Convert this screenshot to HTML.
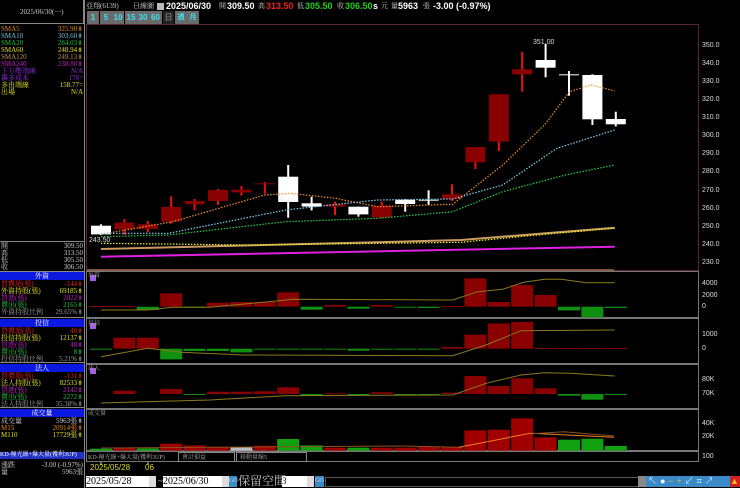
<!DOCTYPE html>
<html><head><meta charset="utf-8"><style>
*{margin:0;padding:0;box-sizing:border-box}
body{width:740px;height:488px;background:#000;overflow:hidden;position:relative;font-family:"Liberation Serif","Noto Serif CJK SC","Noto Sans CJK TC",serif;font-size:8px;color:#ccc}
.a{position:absolute;white-space:nowrap;line-height:1}
.b{font-family:"Liberation Sans","Noto Sans CJK TC",sans-serif;font-weight:bold}
.r{text-align:right}
.hd{position:absolute;left:0;width:84px;height:8px;background:#0a18e0;color:#fff;text-align:center;font-size:7px;line-height:8px}
.btn{position:absolute;top:11px;height:13px;background:#6a6a6a;color:#3ee0f0;font-size:8px;text-align:center;line-height:13px;font-family:"Liberation Sans",sans-serif;font-weight:bold}
.ax{position:absolute;left:702px;font-size:7px;color:#ddd;font-family:"Liberation Sans",sans-serif}
</style></head><body>
<!-- left column -->
<div class="a" style="left:0;top:0;width:84px;height:24px;border-right:1px solid #888;border-bottom:1px solid #888"></div>
<div class="a" style="left:20px;top:9px;font-size:7px;color:#ccc">2025/06/30(一)</div>
<div style="position:absolute;left:84px;top:0;width:1px;height:488px;background:#888"></div>
<div class="a" style="left:1px;top:26px;width:82px;font-size:7px;line-height:7px">
<div style="color:#e08a20">SMA5<span style="float:right">325.90⇟</span></div>
<div style="color:#70c0e0">SMA10<span style="float:right">303.60⇟</span></div>
<div style="color:#20c040">SMA20<span style="float:right">284.03⇟</span></div>
<div style="color:#e0e020">SMA60<span style="float:right">248.94⇟</span></div>
<div style="color:#c09060">SMA120<span style="float:right">249.13⇟</span></div>
<div style="color:#c020c0">SMA240<span style="float:right">238.80⇟</span></div>
<div style="color:#9030e0">下方壓端線<span style="float:right">N/A</span></div>
<div style="color:#9030e0">籌多成本<span style="float:right">178=</span></div>
<div style="color:#e0e020">多由端線<span style="float:right">158.77=</span></div>
<div style="color:#e0e020">出場<span style="float:right">N/A</span></div>
</div>
<div style="position:absolute;left:0;top:241px;width:84px;height:1px;background:#888"></div>
<div class="a" style="left:1px;top:243px;width:82px;font-size:7px;line-height:7px;color:#ccc">
<div>開<span style="float:right">309.50</span></div><div>高<span style="float:right">313.50</span></div><div>低<span style="float:right">305.50</span></div><div>收<span style="float:right">306.50</span></div></div>
<div style="position:absolute;left:0;top:271px;width:84px;height:1px;background:#888"></div>
<div class="hd" style="top:272px">外資</div>
<div class="a" style="left:1px;top:281px;width:82px;font-size:7px;line-height:7px">
<div style="color:#e02020">買賣超(張)<span style="float:right">-144⇟</span></div>
<div style="color:#e0e020">外資持股(張)<span style="float:right">69185⇟</span></div>
<div style="color:#c020c0">買進(張)<span style="float:right">2022⇟</span></div>
<div style="color:#20c040">賣出(張)<span style="float:right">2165⇟</span></div>
<div style="color:#999">外資持股比例<span style="float:right">29.65%⇟</span></div></div>
<div style="position:absolute;left:0;top:317px;width:84px;height:1px;background:#888"></div>
<div class="hd" style="top:319px">投信</div>
<div class="a" style="left:1px;top:328px;width:82px;font-size:7px;line-height:7px">
<div style="color:#e02020">買賣超(張)<span style="float:right">40⇟</span></div>
<div style="color:#e0e020">投信持股(張)<span style="float:right">12137⇟</span></div>
<div style="color:#c020c0">買進(張)<span style="float:right">48⇟</span></div>
<div style="color:#20c040">賣出(張)<span style="float:right">8⇟</span></div>
<div style="color:#999">投信持股比例<span style="float:right">5.21%⇟</span></div></div>
<div style="position:absolute;left:0;top:362px;width:84px;height:1px;background:#888"></div>
<div class="hd" style="top:364px">法人</div>
<div class="a" style="left:1px;top:373px;width:82px;font-size:7px;line-height:7px">
<div style="color:#e02020">買賣超(張)<span style="float:right">-131⇟</span></div>
<div style="color:#e0e020">法人持股(張)<span style="float:right">82533⇟</span></div>
<div style="color:#c020c0">買進(張)<span style="float:right">2142⇟</span></div>
<div style="color:#20c040">賣出(張)<span style="float:right">2272⇟</span></div>
<div style="color:#999">法人持股比例<span style="float:right">35.38%⇟</span></div></div>
<div style="position:absolute;left:0;top:407px;width:84px;height:1px;background:#888"></div>
<div class="hd" style="top:409px">成交量</div>
<div class="a" style="left:1px;top:418px;width:82px;font-size:7px;line-height:7px">
<div style="color:#ccc">成交量<span style="float:right">5963張⇟</span></div>
<div style="color:#e08a20">M15<span style="float:right">20914張⇟</span></div>
<div style="color:#e0e020">M110<span style="float:right">17729張⇟</span></div></div>
<div class="hd" style="top:452px;height:7px;line-height:7px;background:#2030c0;font-size:6px;text-align:left">KD-極光線+爆大量(獲利3UP)</div>
<div class="a" style="left:1px;top:462px;width:82px;font-size:7px;line-height:7px;color:#ccc">
<div>漲跌<span style="float:right">-3.00 (-0.97%)</span></div><div>量<span style="float:right">5963張</span></div></div>

<!-- header -->
<div class="a" style="left:86px;top:3px;font-size:7px;color:#ccc">亞翔(6139)</div>
<div class="a" style="left:133px;top:3px;font-size:7px;color:#ccc">日線圖</div>
<div class="a" style="left:157px;top:3px;width:7px;height:7px;background:#bbb"></div>
<div class="a b" style="left:166px;top:2px;font-size:9px;color:#fff">2025/06/30</div>
<div class="a" style="left:219px;top:3px;font-size:7px">開</div>
<div class="a b" style="left:227px;top:2px;font-size:9px;color:#fff">309.50</div>
<div class="a" style="left:258px;top:3px;font-size:7px">高</div>
<div class="a b" style="left:266px;top:2px;font-size:9px;color:#f02020">313.50</div>
<div class="a" style="left:297px;top:3px;font-size:7px">低</div>
<div class="a b" style="left:305px;top:2px;font-size:9px;color:#20d020">305.50</div>
<div class="a" style="left:337px;top:3px;font-size:7px">收</div>
<div class="a b" style="left:345px;top:2px;font-size:9px;color:#20d020">306.50</div>
<div class="a b" style="left:373px;top:2px;font-size:9px;color:#fff">s</div>
<div class="a" style="left:381px;top:3px;font-size:7px">元</div>
<div class="a" style="left:391px;top:3px;font-size:7px">量</div>
<div class="a b" style="left:398px;top:2px;font-size:9px;color:#fff">5963</div>
<div class="a" style="left:423px;top:3px;font-size:7px">張</div>
<div class="a b" style="left:433px;top:2px;font-size:9px;color:#fff">-3.00 (-0.97%)</div>
<div class="btn" style="left:87px;width:12px">1</div>
<div class="btn" style="left:100px;width:12px">5</div>
<div class="btn" style="left:112px;width:12px">10</div>
<div class="btn" style="left:125px;width:12px">15</div>
<div class="btn" style="left:137px;width:12px">30</div>
<div class="btn" style="left:149px;width:13px">60</div>
<div class="btn" style="left:163px;width:11px;background:#222;color:#777">日</div>
<div class="btn" style="left:175px;width:12px;font-size:7px">週</div>
<div class="btn" style="left:187px;width:12px;font-size:7px">月</div>

<!-- axis labels -->
<div class="ax" style="top:42px">350.0</div><div class="ax" style="top:60px">340.0</div><div class="ax" style="top:78px">330.0</div><div class="ax" style="top:96px">320.0</div><div class="ax" style="top:114px">310.0</div><div class="ax" style="top:132px">300.0</div><div class="ax" style="top:150px">290.0</div><div class="ax" style="top:168px">280.0</div><div class="ax" style="top:187px">270.0</div><div class="ax" style="top:205px">260.0</div><div class="ax" style="top:223px">250.0</div><div class="ax" style="top:241px">240.0</div><div class="ax" style="top:259px">230.0</div>
<div class="ax" style="top:280px">4000</div><div class="ax" style="top:292px">2000</div><div class="ax" style="top:303px">0</div>
<div class="ax" style="top:331px">1000</div><div class="ax" style="top:345px">0</div>
<div class="ax" style="top:376px">80K</div><div class="ax" style="top:390px">70K</div>
<div class="ax" style="top:420px">40K</div><div class="ax" style="top:433px">20K</div><div class="ax" style="top:453px">100</div>

<svg id="c" width="740" height="488" style="position:absolute;left:0;top:0" xmlns="http://www.w3.org/2000/svg">
<rect x="86.5" y="24.5" width="612" height="246" fill="none" stroke="#5a2838"/>
<rect x="86.5" y="271.5" width="612" height="46" fill="none" stroke="#777"/>
<rect x="86.5" y="318.5" width="612" height="45" fill="none" stroke="#777"/>
<rect x="86.5" y="364.5" width="612" height="44" fill="none" stroke="#777"/>
<rect x="86.5" y="409.5" width="612" height="41" fill="none" stroke="#777"/>
<rect x="86.5" y="451.5" width="612" height="10" fill="none" stroke="#777"/>
<rect x="90" y="275" width="6" height="6" fill="#a060e0"/>
<rect x="90" y="323" width="6" height="6" fill="#a060e0"/>
<rect x="90" y="368" width="6" height="6" fill="#a060e0"/>
<g id="g"></g>
<text x="533" y="44" fill="#ddd" font-size="7" font-family="Liberation Sans">351.00</text>
<text x="89" y="242" fill="#ddd" font-size="7" font-family="Liberation Sans">243.50</text>
<text x="88" y="277" fill="#aaa" font-size="6">外資</text>
<text x="88" y="325" fill="#aaa" font-size="6">投信</text>
<text x="88" y="370" fill="#aaa" font-size="6">法人</text>
<text x="88" y="415" fill="#aaa" font-size="6">成交量</text>
<text x="88" y="459" fill="#aaa" font-size="6">KD-極光線+爆大量(獲利3UP)</text>
<rect x="178.5" y="452.5" width="56" height="9" fill="#000" stroke="#888"/>
<text x="182" y="459" fill="#aaa" font-size="6">會計損益</text>
<rect x="236.5" y="452.5" width="70" height="9" fill="none" stroke="#888"/>
<text x="240" y="459" fill="#aaa" font-size="6">移動量線5</text>
<text x="90" y="470" fill="#d8d820" font-size="8" font-family="Liberation Sans">2025/05/28</text>
<text x="145" y="470" fill="#d8d820" font-size="8" font-family="Liberation Sans">06</text>
</svg>

<!-- bottom controls -->
<div class="a" style="left:86px;top:476px;width:70px;height:11px;background:#fff;color:#000;font-size:10px;line-height:11px">2025/05/28<span style="position:absolute;right:0;top:0;width:7px;height:11px;background:#ddd"></span></div>
<div class="a" style="left:158px;top:477px;color:#ccc;font-size:9px">~</div>
<div class="a" style="left:163px;top:476px;width:66px;height:11px;background:#fff;color:#000;font-size:10px;line-height:11px">2025/06/30<span style="position:absolute;right:0;top:0;width:7px;height:11px;background:#ddd"></span></div>
<div class="a" style="left:229px;top:476px;width:8px;height:11px;background:#3a8ac8;color:#cde;font-size:6px;line-height:11px">GO</div>
<div class="a" style="left:238px;top:475px;font-size:12px;color:#ccc">保留空間</div>
<div class="a" style="left:282px;top:476px;width:32px;height:11px;background:#fff;color:#000;font-size:9px;line-height:11px">3<span style="position:absolute;right:0;top:0;width:7px;height:11px;background:#ddd"></span></div>
<div class="a" style="left:315px;top:476px;width:9px;height:11px;background:#3a8ac8;color:#cde;font-size:6px;line-height:11px">GO</div>
<div class="a" style="left:325px;top:477px;width:315px;height:10px;background:#000;border:1px solid #555"></div>
<div class="a" style="left:638px;top:476px;width:8px;height:11px;background:#888"></div>
<div class="a" style="left:646px;top:476px;width:86px;height:11px;background:#3a8ac8"></div>
<div class="a" style="left:730px;top:476px;width:10px;height:11px;background:#d02020;color:#f0c020;font-size:9px;line-height:11px">▲</div>
<div class="a" style="left:648px;top:476px;color:#fff;font-size:9px;letter-spacing:3px;line-height:11px">↖●<span style="color:#f0d020">−+</span>↙⌗↗</div>

<script>
var g=document.getElementById('g'),h='';
function X(i){return 101+23.4*i}
function R(x,y,w,hh,f){h+='<rect x="'+x.toFixed(1)+'" y="'+y.toFixed(1)+'" width="'+w+'" height="'+Math.max(hh,1).toFixed(1)+'" fill="'+f+'"/>'}
var C=[['w',602,628,598,630],['r',593,613,582,630],['r',598,612,588,622],['r',546,590,514,596],['r',528,538,522,556],['r',495,528,492,540],['r',494,502,483,512],['r',475,478,471,506],['w',455,531,420,578],['w',535,545,515,556],['r',538,545,530,570],['w',545,568,545,575],['r',542,577,530,580],['w',524,537,522,560],['w',524,527,496,540],['r',508,522,478,528],['r',366,412,366,432],['r',208,350,208,378],['r',133,148,80,200],['w',105,128,57,157],['w',148,150,138,212],['w',150,283,148,300],['w',282,298,260,304]];
C.forEach(function(c,i){var x=X(i),t=25+c[1]/3,b=25+c[2]/3,wt=25+c[3]/3,wb=25+c[4]/3;
 var wc=c[0]=='w'?'#fff':'#f01010',bc=c[0]=='w'?'#fff':'#8a0000';
 R(x-1,wt,2,wb-wt,wc);R(x-10,t,20,b-t,bc);});
function L(p,col,dash,sw){h+='<polyline fill="none" stroke="'+col+'" stroke-width="'+(sw||1)+'" '+(dash?'stroke-dasharray="1.5 1.5" ':'')+'points="'+p.map(function(q){return q.join(',')}).join(' ')+'"/>'}
L([[101,234.3],[172.7,221.7],[264.6,195],[289.7,193.3],[335.6,198.3],[377.4,206.7],[452.6,204.3],[502.7,165],[544.5,125],[569.5,91.7],[591.3,85],[614.7,91]],'#f09030',1,1.2);
L([[101,233.3],[168.5,233.3],[285.5,210],[377.4,200],[452.6,199],[502.7,185],[557,148.3],[614.7,130]],'#80d0f0',1,1.2);
L([[101,236.7],[168.5,235],[285.5,221.7],[377.4,218.3],[452.6,211.7],[502.7,191.7],[565.4,175],[614.7,165]],'#20d040',1,1.2);
L([[101,249],[335.6,243.3],[461,240],[614.7,227.7]],'#c89a60',0,2);
L([[101,243.3],[252,245],[461,242.3],[544.5,234.3],[614.7,228.3]],'#f0f020',1,1.2);
L([[101,256.7],[614.7,246.7]],'#e020e0',0,2);
L([[87,270],[614,270]],'#a07050',0,1.5);
function P(z,bars,line){bars.forEach(function(b,i){if(b==null)return;var x=X(i),y0=z,col;
 if(b<0){col='#8a0000';R(x-11,y0+b,22,-b,col)}else{col='#109010';R(x-11,y0,22,b,col)}});
 if(line)L(line,'#8a7a20',0,1);}
var z1=306.7;
P(z1,[-.7,-.7,3.3,-13.3,1,-4,-4.7,-4.7,-14.3,3,-1.7,2,-1.7,1,1.3,-.7,-28.3,-4.7,-21.7,-11.7,3.7,10.7,1.3],
 [[101,310],[147.6,310],[172.7,307.3],[210,307.3],[293.9,299.3],[452.6,300],[477.6,291.7],[502.7,289.3],[523.6,282.3],[544.5,279.3],[561.2,279.3],[586.3,282.7],[614.7,282.7]]);
var z2=348.7;
P(z2,[1,-11,-11,10.7,2.3,2.3,3.7,1,1,1,1,2,1,1,1,-1.7,-14,-25.3,-26.7,-.7,-.7,-.7,-.7],
 [[101,356.7],[147.6,348.3],[181,352.3],[243.7,355],[452.6,355.7],[486,345],[521,330.7],[614.7,330]]);
var z3=394;
P(z3,[null,-3.3,null,-5,.7,-2.3,-2.3,-2.7,-6.7,1.7,-.7,1.7,-1.7,1,1,-1.3,-18,-8,-15.7,-5.7,1.7,5.7,.7],
 [[101,403],[210,400],[285.5,395.7],[452.6,395],[486,383.3],[521,375],[544.5,372.7],[569.5,373.3],[614.7,376]]);
var vz=450.7,V=[[2,'g'],[3.3,'r'],[2.3,'g'],[7,'r'],[5.3,'r'],[4,'r'],[3.7,'#bbb'],[5,'r'],[11.7,'g'],[5.3,'g'],[3,'r'],[3,'g'],[3,'r'],[3,'r'],[3.7,'r'],[3.7,'r'],[20.3,'r'],[21,'r'],[32.3,'r'],[13.3,'r'],[11,'g'],[12,'g'],[4.7,'g']];
V.forEach(function(v,i){var c=v[1]=='r'?'#a00000':v[1]=='g'?'#10a010':v[1];R(X(i)-11,vz-v[0],22,v[0],c)});
L([[458.8,447.3],[530.3,433.3],[614,437.3]],'#f08020',0,1);
L([[530.3,433.9],[564,431.7],[614,436]],'#8a5020',0,1);
L([[101,448],[400,446],[458.8,447.3]],'#8a5020',0,1);
h+='<line x1="101" y1="462" x2="101" y2="465" stroke="#ccc"/><line x1="148" y1="462" x2="148" y2="465" stroke="#ccc"/>';
g.innerHTML=h;
</script>
</body></html>
